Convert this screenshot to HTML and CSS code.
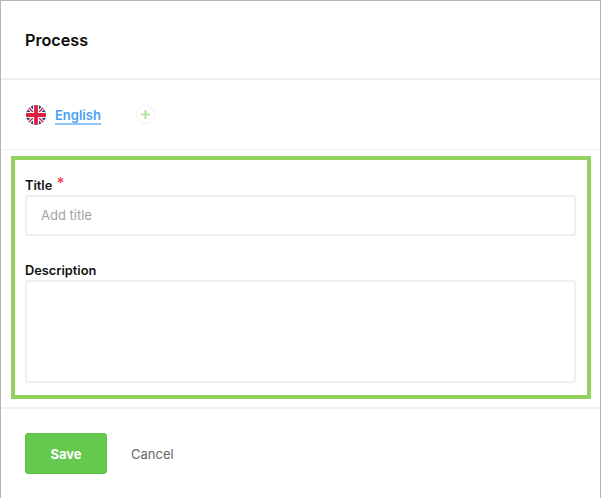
FILE: index.html
```html
<!DOCTYPE html>
<html lang="en">
<head>
<meta charset="utf-8">
<title>Process</title>
<link rel="stylesheet" href="styles.css">
</head>
<body>
<main class="dialog">
  <header class="dialog-header"><h1 class="dialog-title">Process</h1></header>
  <nav class="lang-row">
    <svg class="flag" viewBox="0 0 20 20" width="20" height="20" aria-hidden="true">
      <defs><clipPath id="flag-clip"><circle cx="10" cy="10" r="10"/></clipPath></defs>
      <g clip-path="url(#flag-clip)">
        <rect width="20" height="20" fill="#26408f"/>
        <path d="M0 0 L20 20 M20 0 L0 20" stroke="#f6f6f8" stroke-width="3.6"/>
        <path d="M0 0 L20 20 M20 0 L0 20" stroke="#dc1f3c" stroke-width="1.3"/>
        <path d="M10 0V20M0 10H20" stroke="#f6f6f8" stroke-width="6"/>
        <path d="M10 0V20M0 10H20" stroke="#dc1f3c" stroke-width="3.8"/>
      </g>
    </svg>
    <a class="lang-link" href="#">English</a>
    <button class="lang-add" type="button" aria-label="Add language">
      <svg viewBox="0 0 12 12" width="12" height="12" aria-hidden="true"><path d="M6 1V11M1 6H11" stroke="#b5e6a3" stroke-width="2.4"/></svg>
    </button>
  </nav>
  <form class="highlight">
    <label class="field-label field-title" for="title">Title <span class="required">*</span></label>
    <input class="input" id="title" type="text" placeholder="Add title">
    <label class="field-label field-desc" for="desc">Description</label>
    <textarea class="textarea" id="desc"></textarea>
  </form>
  <footer class="dialog-footer">
    <button class="btn-save" type="button">Save</button>
    <button class="btn-cancel" type="button">Cancel</button>
  </footer>
</main>
</body>
</html>
```
FILE: styles.css
```css
* { box-sizing: border-box; }
html, body { margin: 0; padding: 0; height: 100%; background: #fff; }
body { font-family: "Inter", "Liberation Sans", sans-serif; color: #111; overflow: hidden; }
.dialog {
  width: 601px; height: 498px;
  border-left: 1px solid #b5b5b5;
  border-right: 1px solid #b5b5b5;
  border-top: 1px solid #b5b5b5;
  display: flex; flex-direction: column;
}
.dialog-header {
  height: 79px; padding: 0 24px;
  display: flex; align-items: center;
  border-bottom: 2px solid #f0f0f0;
}
.dialog-title { margin: 0; font-size: 16.2px; font-weight: 600; color: #0d0d0d; }
.lang-row {
  height: 70px; padding: 0 24px;
  display: flex; align-items: center;
  border-bottom: 1px solid #f0f0f0;
}
.flag { display: block; margin-left: 1px; }
.lang-link {
  margin-left: 9px;
  font-size: 13px; font-weight: 600; line-height: 16px;
  color: #4a9ff5; text-decoration: none;
  border-bottom: 2px solid #8cc4fa;
  margin-top: 2px;
}
.lang-add {
  margin-left: 35px; width: 19px; height: 19px; padding: 0;
  border: 1px solid #f0f0f0; border-radius: 50%; background: #fff;
  display: flex; align-items: center; justify-content: center;
}
.lang-add svg { width: 11px; height: 11px; }
.highlight {
  margin: 6px 9px 0 10px;
  height: 243px;
  border: 4px solid #93d25f;
  padding: 0 11px 0 10px;
  display: flex; flex-direction: column;
}
.field-label { font-size: 12.8px; font-weight: 600; line-height: 16px; color: #111; display: block; }
.field-title { margin-top: 18px; }
.field-desc { margin-top: 27px; }
.required { color: #f0454f; font-size: 15px; margin-left: 1px; line-height: 10px; vertical-align: 2px; }
.input, .textarea {
  display: block; width: 100%;
  border: 2px solid #efefef; border-radius: 3px;
  background: #fff; outline: none; font-family: inherit; font-size: 13px;
  padding: 0 14px;
}
.input { height: 41px; margin-top: 1px; padding-bottom: 2px; }
.input::placeholder { color: #a3a3a3; opacity: 1; }
.textarea { height: 103px; margin-top: 1px; resize: none; }
.dialog-footer {
  margin-top: 8px;
  border-top: 2px solid #f0f0f0;
  padding: 24px 24px 0;
  display: flex; align-items: center;
}
.btn-save {
  width: 82px; height: 41px;
  background: #65c94f; color: #fff; border: 1px solid #5fc04a; border-radius: 3px;
  font-family: inherit; font-size: 13px; font-weight: 700;
}
.btn-cancel {
  margin-left: 24px; padding: 0; background: none; border: 0;
  font-family: inherit; font-size: 13px; color: #666;
}
```
